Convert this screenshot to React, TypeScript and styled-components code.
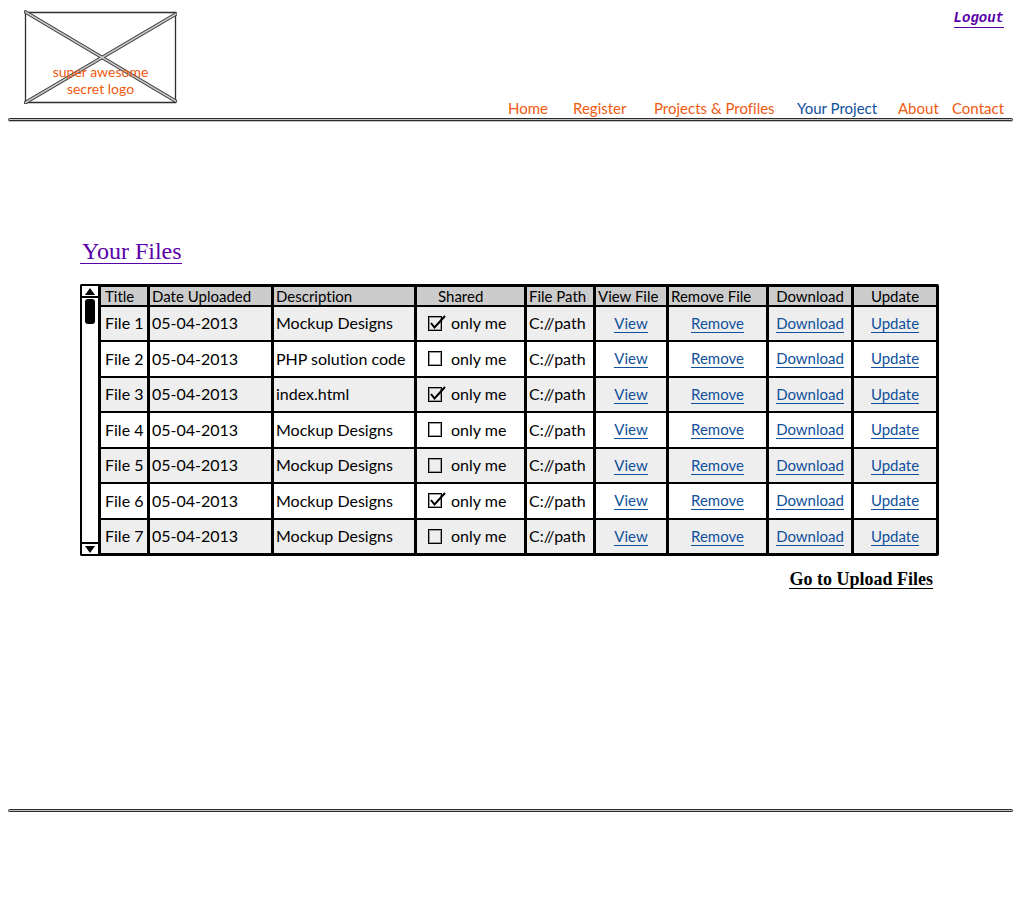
import React from "react";
import styled, { createGlobalStyle } from "styled-components";

const GlobalStyle = createGlobalStyle`
  *, *::before, *::after { box-sizing: border-box; }
  body {
    margin: 0;
    background: #fff;
    color: #000;
    font-family: Lato, "Liberation Sans", sans-serif;
    font-size: 16px;
    font-variant-ligatures: none;
  }
`;

const orange = "#f05a10";
const blue = "#10509c";
const purple = "#5a00a8";

const Page = styled.div`
  padding: 0 11px 0 8px;
`;

const Header = styled.header`
  display: flex;
  justify-content: space-between;
  align-items: stretch;
  height: 118px;
  padding: 10px 9px 0 16px;
`;

const Logo = styled.a`
  position: relative;
  display: block;
  width: 153px;
  height: 94px;
  color: ${orange};
  text-decoration: none;
`;

const LogoText = styled.span`
  position: absolute;
  top: 53px;
  left: 0;
  right: 0;
  font-size: 14px;
  line-height: 17px;
  text-align: center;
`;

const HeaderSide = styled.div`
  display: flex;
  flex-direction: column;
  justify-content: space-between;
  align-items: flex-end;
`;

const Logout = styled.a`
  border-bottom: 1px solid ${purple};
  color: ${purple};
  font-family: "Liberation Mono", monospace;
  font-size: 14px;
  font-weight: 700;
  font-style: italic;
  line-height: 17px;
  text-decoration: none;
`;

const Nav = styled.nav`
  display: grid;
  grid-template-columns: 65px 81px 143px 101px 54px 52px;
`;

const NavLink = styled.a<{ $current?: boolean }>`
  color: ${(p) => (p.$current ? blue : orange)};
  font-size: 15px;
  line-height: 20px;
  white-space: nowrap;
  text-decoration: none;
`;

const Rule = styled.hr`
  height: 3px;
  margin: 0;
  border: 1px solid #2b2b2b;
  border-radius: 2px;
  background: #c4c4c4;
  box-shadow: 0 1px 0 #c4c4c4;
`;

const Main = styled.main`
  display: flex;
  flex-direction: column;
  align-items: flex-start;
  padding: 118px 74px 220px 72px;
`;

const Title = styled.h1`
  margin: 0 0 20px 0;
  padding: 0 0 0 2px;
  border-bottom: 1px solid ${purple};
  color: ${purple};
  font-family: "Liberation Serif", serif;
  font-size: 24px;
  font-weight: 400;
  line-height: 24px;
`;

const FilePanel = styled.section`
  display: flex;
  width: 100%;
`;

const ScrollBar = styled.div`
  display: flex;
  flex: 0 0 18px;
  flex-direction: column;
  border: 2px solid #000;
  border-right: 0;
  border-radius: 2px 0 0 2px;
`;

const ScrollButton = styled.button<{ $edge: "top" | "bottom" }>`
  display: flex;
  align-items: center;
  justify-content: center;
  height: 12px;
  padding: 0;
  border: 0 solid #000;
  border-${(p) => (p.$edge === "top" ? "bottom" : "top")}-width: 2px;
  background: #fff;
`;

const Track = styled.div`
  display: flex;
  flex: 1;
  justify-content: center;
  padding: 1px 0;
`;

const Thumb = styled.div`
  width: 10px;
  height: 25px;
  border-radius: 3px;
  background: #000;
`;

const FileTable = styled.table`
  flex: 1;
  width: 100%;
  table-layout: fixed;
  border-collapse: separate;
  border-spacing: 0;
  border: solid #000;
  border-width: 3px 0 1px 3px;
  border-radius: 0 2px 2px 0;
`;

const HeadCell = styled.th<{ $indent: number; $center?: boolean }>`
  height: 20px;
  padding: 0 0 0 ${(p) => p.$indent}px;
  border: solid #000;
  border-width: 0 3px 2px 0;
  background: #ccc;
  font-size: 15px;
  font-weight: 400;
  line-height: 18px;
  text-align: ${(p) => (p.$center ? "center" : "left")};
  white-space: nowrap;
`;

const Row = styled.tr`
  height: 36px;
  background: #fff;
  &:nth-child(odd) {
    height: 35px;
    background: #eee;
  }
`;

const Cell = styled.td<{ $indent: number; $center?: boolean }>`
  padding: 0 0 1px ${(p) => p.$indent}px;
  border: solid #000;
  border-width: 0 3px 2px 0;
  font-size: 16px;
  line-height: 18px;
  text-align: ${(p) => (p.$center ? "center" : "left")};
  white-space: nowrap;
`;

const ActionLink = styled.a`
  display: inline-block;
  border-bottom: 1px solid ${blue};
  color: ${blue};
  font-size: 15px;
  line-height: 17px;
  text-decoration: none;
`;

const Share = styled.label`
  display: flex;
  align-items: center;
  gap: 9px;
`;

const BoxWrap = styled.span`
  position: relative;
  display: block;
  width: 14px;
  height: 15px;
`;

const Box = styled.input`
  display: block;
  appearance: none;
  width: 14px;
  height: 15px;
  margin: 0;
  border: 1px solid #000;
  outline: 1px solid #9a9a9a;
  outline-offset: -2px;
  & + svg { display: none; }
  &:checked + svg { display: block; }
`;

const Tick = styled.svg`
  position: absolute;
  top: -2px;
  left: 0;
  pointer-events: none;
`;

const UploadLink = styled.a`
  align-self: flex-end;
  margin: 14px 6px 0 0;
  border-bottom: 1px solid #000;
  color: #000;
  font-family: "Liberation Serif", serif;
  font-size: 18px;
  font-weight: 700;
  line-height: 18px;
  text-decoration: none;
`;

const columns = [
  { label: "Title", width: 49, indent: 4 },
  { label: "Date Uploaded", width: 124, indent: 2 },
  { label: "Description", width: 143, indent: 2 },
  { label: "Shared", width: 110, indent: 21 },
  { label: "File Path", width: 69, indent: 2 },
  { label: "View File", width: 73, indent: 2 },
  { label: "Remove File", width: 100, indent: 2 },
  { label: "Download", width: 85, indent: 0, center: true },
  { label: "Update", width: 85, indent: 0, center: true },
];

const files = [
  { title: "File 1", description: "Mockup Designs", onlyMe: true },
  { title: "File 2", description: "PHP solution code", onlyMe: false },
  { title: "File 3", description: "index.html", onlyMe: true },
  { title: "File 4", description: "Mockup Designs", onlyMe: false },
  { title: "File 5", description: "Mockup Designs", onlyMe: false },
  { title: "File 6", description: "Mockup Designs", onlyMe: true },
  { title: "File 7", description: "Mockup Designs", onlyMe: false },
];

const actions = ["View", "Remove", "Download", "Update"];

const navItems = ["Home", "Register", "Projects & Profiles", "Your Project", "About", "Contact"];

function LogoFrame() {
  return (
    <svg width="153" height="94" viewBox="0 0 153 94" fill="none" aria-hidden="true">
      <path d="M1.5 2.5H151.5V92.5H1.5Z" stroke="#2e2e2e" strokeWidth="1.3" />
      <path d="M1.5 2L151.5 91M152 4L1.5 92.5" stroke="#3a3a3a" strokeWidth="3.6" strokeLinecap="round" />
      <path d="M1.5 2L151.5 91M152 4L1.5 92.5" stroke="#c8c8c8" strokeWidth="1.5" strokeLinecap="round" />
    </svg>
  );
}

export default function App() {
  return (
    <>
      <GlobalStyle />
      <Page>
        <Header>
          <Logo href="#home">
            <LogoFrame />
            <LogoText>
              super awesome
              <br />
              secret logo
            </LogoText>
          </Logo>
          <HeaderSide>
            <Logout href="#logout">Logout</Logout>
            <Nav>
              {navItems.map((item) => (
                <NavLink key={item} href="#nav" $current={item === "Your Project"}>
                  {item}
                </NavLink>
              ))}
            </Nav>
          </HeaderSide>
        </Header>
        <Rule />
        <Main>
          <Title>Your Files</Title>
          <FilePanel>
            <ScrollBar>
              <ScrollButton type="button" aria-label="Scroll up" $edge="top">
                <svg width="10" height="7" viewBox="0 0 10 7">
                  <path d="M5 0L10 7H0Z" />
                </svg>
              </ScrollButton>
              <Track>
                <Thumb />
              </Track>
              <ScrollButton type="button" aria-label="Scroll down" $edge="bottom">
                <svg width="10" height="7" viewBox="0 0 10 7">
                  <path d="M0 0H10L5 7Z" />
                </svg>
              </ScrollButton>
            </ScrollBar>
            <FileTable>
              <colgroup>
                {columns.map((c) => (
                  <col key={c.label} width={c.width} />
                ))}
              </colgroup>
              <thead>
                <tr>
                  {columns.map((c) => (
                    <HeadCell key={c.label} scope="col" $indent={c.indent} $center={c.center}>
                      {c.label}
                    </HeadCell>
                  ))}
                </tr>
              </thead>
              <tbody>
                {files.map((f) => (
                  <Row key={f.title}>
                    <Cell $indent={4}>{f.title}</Cell>
                    <Cell $indent={2}>05-04-2013</Cell>
                    <Cell $indent={2}>{f.description}</Cell>
                    <Cell $indent={11}>
                      <Share>
                        <BoxWrap>
                          <Box type="checkbox" defaultChecked={f.onlyMe} />
                          <Tick width="18" height="17" viewBox="0 0 18 17" fill="none">
                            <path d="M3 9L6.5 13.5L17 2" stroke="#000" strokeWidth="2" />
                          </Tick>
                        </BoxWrap>
                        only me
                      </Share>
                    </Cell>
                    <Cell $indent={2}>C://path</Cell>
                    {actions.map((a) => (
                      <Cell key={a} $indent={0} $center>
                        <ActionLink href="#file">{a}</ActionLink>
                      </Cell>
                    ))}
                  </Row>
                ))}
              </tbody>
            </FileTable>
          </FilePanel>
          <UploadLink href="#upload">Go to Upload Files</UploadLink>
        </Main>
        <Rule />
      </Page>
    </>
  );
}
